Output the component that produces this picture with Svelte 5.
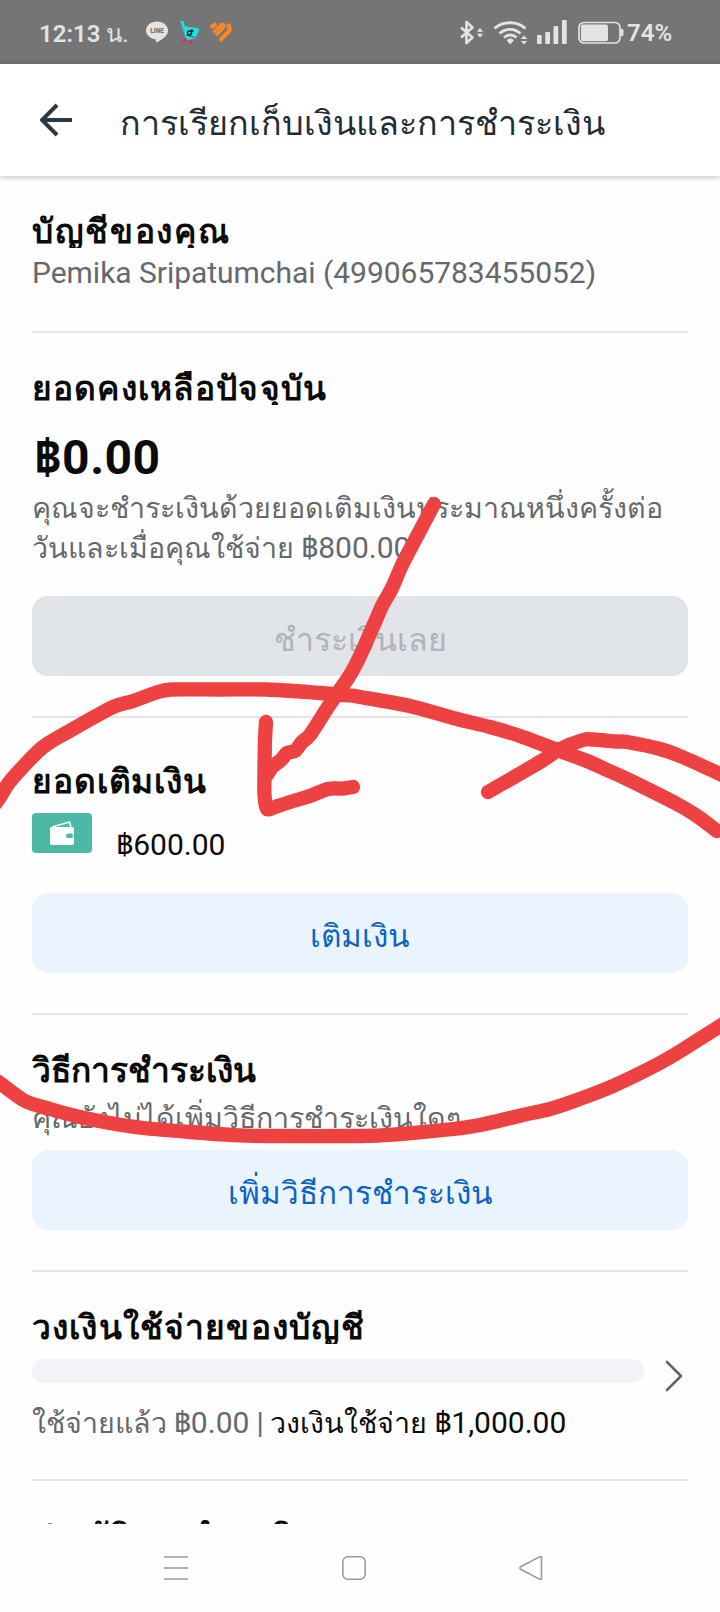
<script>
  // Freehand marker strokes, as the points each stroke passes through.
  const strokes = [
    [[-8,808],[0,797],[8,784],[20,770],[43,747],[73,729],[113,707],[133,701],[155,693],[171,689.5],[220,689.5],[267,689.5],[320,693],[350,695.5],[360,697],[410,706],[453,718],[490,727],[520,736],[560,751],[587,761],[607,770],[627,779],[677,804],[697,816],[717,831]],
    [[488,792],[540,762],[560,749],[583,740],[593,739.5],[617,741.5],[627,742],[660,749],[680,756],[720,774],[730,779]],
    [[434,504],[415,540],[402,565],[392,588],[382,606],[375,622],[360,656],[350,675],[337,694],[328,707],[310,735],[302,742],[295,751],[287,753],[281,760],[272,767],[267,775]],
    [[266,722],[265,740],[264.5,770],[264.5,795],[267,809],[275,807],[290,802],[310,796],[328,789],[343,788.5],[353,787]],
    [[-8,1078],[0,1083],[25,1101],[50,1109],[80,1117],[110,1123],[143,1128],[190,1132],[233,1135],[267,1136],[360,1136],[400,1134],[453,1129],[480,1125],[523,1115],[550,1109],[577,1100],[613,1086],[660,1063],[687,1047],[720,1026],[728,1021]]
  ];

  function smooth(p) {
    let d = `M${p[0][0]} ${p[0][1]}`;
    for (let i = 0; i < p.length - 1; i++) {
      const a = p[i - 1] ?? p[i], b = p[i], c = p[i + 1], e = p[i + 2] ?? c;
      const k = 7;
      d += `C${b[0] + (c[0] - a[0]) / k} ${b[1] + (c[1] - a[1]) / k} ${c[0] - (e[0] - b[0]) / k} ${c[1] - (e[1] - b[1]) / k} ${c[0]} ${c[1]}`;
    }
    return d;
  }
</script>

<div class="screen">
  <div class="status">
    <span class="clock">12:13 <i>น.</i></span>
    <svg class="apps" width="88" height="24" viewBox="0 0 88 24">
      <path d="M11 .5C4.900.5 0 4.500 0 9.400c0 4.400 4 8.100 9.400 8.800.9.200.6 1.500.4 3.300C14.500 19.500 22 15.500 22 9.400 22 4.500 17.100.5 11 .5Z" fill="#e3e3e3" />
      <text x="11" y="12" text-anchor="middle" class="line">LINE</text>
      <path d="M34.500.8 37 1.200 38 5.500 53 8 49 17.200 40.500 18.500" fill="#1fe0df" stroke="#1fe0df" stroke-width="1" stroke-linejoin="round" />
      <path d="M34.500.8H37l3 15.500 9 .8" fill="none" stroke="#1fe0df" stroke-width="1.600" />
      <path d="m40 14 9 2.500" stroke="#17696d" stroke-width="1" />
      <circle cx="43.500" cy="12" r="2" fill="none" stroke="#111" stroke-width="1.300" /><path d="M45.500 12V8.500c.3 1 1 1.500 2 1.600" fill="none" stroke="#111" stroke-width="1.200" />
      <path d="m36 18.500 4-1-.5 2.500-2 1zM42.500 20.500l4-1-.5 2.500-2 .5z" fill="#d5305f" stroke="#d5305f" />
      <g fill="none" stroke="#f6882b" stroke-width="4.400" stroke-linecap="round" stroke-linejoin="round">
        <path d="m66.300 5.300 2.500-1.500" />
        <path d="m68.200 10.500 6.500-6.300c1.800-1.700 4.300.2 2.800 2.300L70.800 13.500" stroke-width="3.500" />
        <path d="m75 18.300 7.200-7.300c2.300-2.500 1.300-5.400.4-6.400" />
      </g>
    </svg>
    <svg class="system" width="166" height="26" viewBox="0 0 166 26">
      <g fill="none" stroke="#e3e3e3">
        <path d="m2 7.500 11.500 10L7.500 23V2L13.500 7.500 2 17.500" stroke-width="2.600" stroke-linejoin="round" />
        <path d="M35.500 8.500c8.500-7.700 22.500-7.700 31 0M40.500 13.500c6.500-5.500 14.500-5.500 21 0M45 17.500c4-3.300 8.500-3.300 12.500-.2" stroke-width="2.900" />
        <rect x="120" y="2.500" width="41" height="20.500" rx="5" stroke-width="1.700" />
      </g>
      <g fill="#e3e3e3">
        <path d="m21 8 3.200 3.700h-6.400ZM21 17.500l3.200-3.700h-6.400ZM65 15.500l3.200 3.500h-6.400ZM65 24.500l3.200-3.500h-6.400Z" />
        <path d="M47.500 20.200c2.300-2.200 5.200-2.200 7.500 0L51.200 24.500Z" />
        <rect x="78" y="15" width="4.700" height="9" rx="1" /><rect x="86.300" y="12" width="4.700" height="12" rx="1" /><rect x="94.500" y="6" width="4.700" height="18" rx="1" /><rect x="103" y="0" width="4.700" height="24" rx="1" />
        <rect x="122" y="4.500" width="27" height="16.700" rx="2" /><path d="M161.500 9h1.500q1.500 0 1.500 1.500v4q0 1.500-1.500 1.500h-1.500Z" />
      </g>
    </svg>
    <span class="percent">74%</span>
  </div>

  <header>
    <svg width="34" height="34" viewBox="0 0 34 34" fill="none" stroke="#263a46" stroke-width="4"><path d="M32 17H3M17 2 2 17l15 15" /></svg>
    <h1>การเรียกเก็บเงินและการชำระเงิน</h1>
  </header>

  <main>
    <section>
      <h2 class="loose">บัญชีของคุณ</h2>
      <p class="name">Pemika Sripatumchai (499065783455052)</p>
    </section>
    <section>
      <h2>ยอดคงเหลือปัจจุบัน</h2>
      <div class="amount">฿0.00</div>
      <p class="note">คุณจะชำระเงินด้วยยอดเติมเงินประมาณหนึ่งครั้งต่อ<br />วันและเมื่อคุณใช้จ่าย <span>฿800.00</span></p>
      <button class="off">ชำระเงินเลย</button>
    </section>
    <section class="funds">
      <h2>ยอดเติมเงิน</h2>
      <div class="wallet">
        <svg width="60" height="40" viewBox="0 0 60 40"><rect width="60" height="40" rx="4" fill="#4bb9a5" /><path d="m20 14 17.500-5 1.500 5.500" fill="none" stroke="#fff" stroke-width="1.500" stroke-linejoin="round" /><path d="M20 14h20q2 0 2 2v4.500h-5q-3 0-3 2.300t3 2.300H42V30q0 2-2 2H20q-2 0-2-2V16q0-2 2-2Z" fill="#fff" /><path d="M41.200 19v7" stroke="#fff" stroke-width="1" /></svg>
        <span>฿600.00</span>
      </div>
      <button>เติมเงิน</button>
    </section>
    <section>
      <h2 class="tight">วิธีการชำระเงิน</h2>
      <p class="method">คุณยังไม่ได้เพิ่มวิธีการชำระเงินใดๆ</p>
      <button class="add">เพิ่มวิธีการชำระเงิน</button>
    </section>
    <section class="limit">
      <h2>วงเงินใช้จ่ายของบัญชี</h2>
      <div class="row">
        <div class="track"></div>
        <svg width="20" height="34" viewBox="0 0 20 34" fill="none" stroke="#626569" stroke-width="2.600" stroke-linecap="round" stroke-linejoin="round"><path d="m3 3 14 14L3 31" /></svg>
      </div>
      <p class="spent">ใช้จ่ายแล้ว <span>฿0.00 |</span> <b>วงเงินใช้จ่าย <span>฿1,000.00</span></b></p>
    </section>
    <section>
      <h2 class="tight">ประวัติการชำระเงิน</h2>
    </section>
  </main>

  <nav>
    <svg width="24" height="24" viewBox="0 0 24 24"><path d="M0 1h24M0 12h24M0 23h24" /></svg>
    <svg width="24" height="24" viewBox="0 0 24 24"><rect x=".8" y=".8" width="22.400" height="22.400" rx="5" /></svg>
    <svg width="24" height="24" viewBox="0 0 24 24"><path d="M1.700 10.700 20.500.9q2-.9 2 1v20.200q0 1.900-2 1L1.700 13.300q-1.600-1.300 0-2.600Z" /></svg>
  </nav>

  <svg class="marker" width="720" height="1612" viewBox="0 0 720 1612">
    {#each strokes as s}<path d={smooth(s)} />{/each}
  </svg>
</div>

<style>
  .screen { position: relative; width: 720px; height: 1612px; overflow: hidden; display: flex; flex-direction: column; background: #fefefe; color: #0b0b0b; font-family: Roboto, sans-serif; }
  .status { height: 64px; background: #757575; color: #e3e3e3; display: flex; align-items: flex-start; font-size: 24px; font-weight: 600; line-height: 32px; box-sizing: border-box; padding: 18px 0 0 39px; }
  .clock { width: 107px; white-space: nowrap; }
  i { font-style: normal; font-weight: 400; }
  .apps { margin-top: 3px; }
  .line { font: 900 6.500px Roboto, sans-serif; fill: #757575; }
  .system { margin: 2px 0 0 225px; }
  .percent { margin-left: 2px; margin-top: -1px; }
  header { height: 112px; flex: none; box-sizing: border-box; background: #fff; display: flex; padding: 39px 0 0 40px; box-shadow: 0 1px 6px #0004; z-index: 1; }
  h1 { margin: -8px 0 0 46px; font-size: 34.100px; font-weight: 400; line-height: 56px; color: #1f2d36; white-space: nowrap; }
  main { flex: none; height: 1348px; overflow: hidden; padding: 0 32px; }
  section { padding: 32px 0 40px; border-bottom: 2px solid #e2e4e6; }
  section:first-child { padding-bottom: 38px; }
  h2 { margin: 0; height: 40px; line-height: 47px; overflow: hidden; font-size: 33.500px; font-weight: 700; letter-spacing: 1.150px; white-space: nowrap; }
  .loose { letter-spacing: 1.700px; }
  .tight { letter-spacing: 0; }
  p { margin: 0; font-size: 28.600px; line-height: 40px; color: #65686c; white-space: nowrap; }
  p span, .wallet span { font: 400 30px/40px Roboto, "Noto Sans Thai Looped", sans-serif; }
  p.name { margin-top: 5px; font-size: 30px; letter-spacing: -.03px; }
  .amount { margin: 25px 0 0 2px; font: 700 48px/56px Roboto, "Noto Sans Thai Looped", sans-serif; letter-spacing: .5px; }
  .note { margin-top: 2px; }
  button { display: block; width: 100%; height: 80px; margin: 28px 0 0; padding: 8px 0 0; border: 0; border-radius: 16px; background: #e9f4ff; color: #0c63c2; font: 400 31.500px/72px Roboto, sans-serif; }
  .off { background: #e1e4e9; color: #b0b3b8; font-size: 32.200px; }
  .funds { padding-top: 40px; }
  .funds h2 { letter-spacing: .9px; }
  .wallet { display: flex; gap: 24px; margin-top: 15px; height: 52px; }
  .wallet span { margin-top: 12px; }
  .method { margin-top: 11px; }
  .add { margin-top: 12px; }
  .limit { padding-bottom: 36px; }
  .row { display: flex; margin-top: 15px; height: 24px; gap: 20px; }
  .track { width: 612px; height: 24px; border-radius: 12px; background: #f2f4f8; }
  .spent { margin-top: 20px; word-spacing: -.4px; }
  b { font-weight: 400; color: #0b0b0b; }
  nav { height: 88px; display: flex; align-items: center; justify-content: space-between; padding: 0 177px 0 164px; }
  nav svg { fill: none; stroke: #999; stroke-width: 1.600; }
  .marker { position: absolute; inset: 0; fill: none; stroke: #ee4141; stroke-width: 14.300; stroke-linecap: round; stroke-linejoin: round; pointer-events: none; }
</style>
